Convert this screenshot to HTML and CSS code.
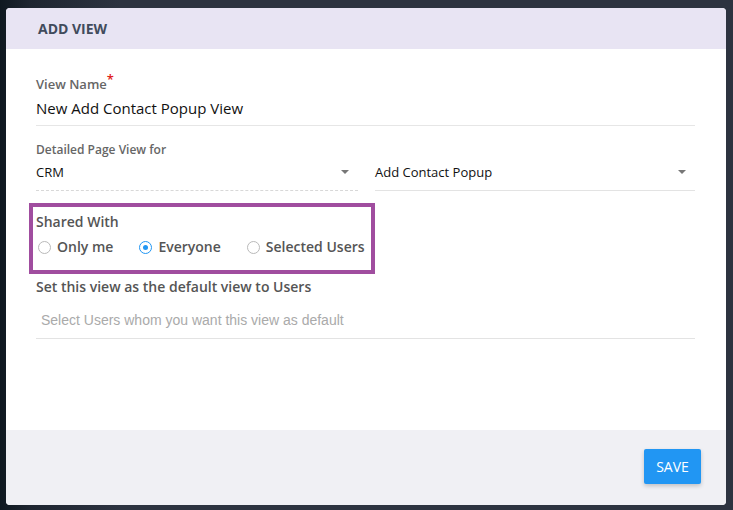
FILE: index.html
```html
<!DOCTYPE html>
<html>
<head lang="en">
    <meta charset="UTF-8">
    <title>Add View</title>
    <link rel="stylesheet" href="styles.css">
</head>
<body>

<div class="modal">
    <div class="modal-head">ADD VIEW</div>
    <div class="modal-body">
        <div class="field">
            <label class="lbl name">View Name<sup class="req">*</sup></label>
            <div class="value">New Add Contact Popup View</div>
        </div>
        <div class="field field-two">
            <label class="lbl">Detailed Page View for</label>
            <div class="selects">
                <div class="select dashed"><span>CRM</span><em class="caret"></em></div>
                <div class="select"><span>Add Contact Popup</span><em class="caret"></em></div>
            </div>
        </div>
        <div class="shared">
            <div class="shared-title">Shared With</div>
            <div class="radios">
                <span class="radio"><i></i>Only me</span>
                <span class="radio on"><i></i>Everyone</span>
                <span class="radio"><i></i>Selected Users</span>
            </div>
        </div>
        <div class="field">
            <label class="lbl big">Set this view as the default view to Users</label>
            <div class="placeholder">Select Users whom you want this view as default</div>
        </div>
    </div>
    <div class="modal-foot">
        <button class="btn-save">SAVE</button>
    </div>
</div>

</body>
</html>
```

FILE: styles.css
```css
* {
    padding: 0;
    margin: 0;
    box-sizing: border-box;
}
html, body { height: 100%; }
body {
    font-family: "Open Sans", "Noto Sans", sans-serif;
    background: linear-gradient(to right, #0f1820 0, #1e2530 30px, #2d3340 120px);
    padding: 8px 0 0 6px;
    overflow: hidden;
}
.modal {
    width: 720px;
    height: 497px;
    background: #fff;
    border-radius: 4px;
    overflow: hidden;
    display: flex;
    flex-direction: column;
}
.modal-head {
    height: 41px;
    line-height: 41px;
    background: #e8e4f3;
    padding-left: 32px;
    font-size: 14px;
    font-weight: 700;
    color: #414b5c;
}
.modal-body {
    flex: 1;
    padding: 27px 31px 0 30px;
}
.lbl {
    display: block;
    font-size: 12px;
    line-height: 16px;
    font-weight: 600;
    color: #666;
}
.lbl.name { font-size: 13px; }
.lbl.big {
    font-size: 14px;
    line-height: 18px;
    color: #555;
}
.req {
    color: #e02020;
    font-size: 13px;
    vertical-align: 0;
    position: relative;
    top: -5px;
    line-height: 0;
}
.value {
    margin-top: 5px;
    font-size: 15px;
    line-height: 22px;
    color: #111;
    padding-bottom: 6px;
    border-bottom: 1px solid #e6e6e6;
}
.field-two { margin-top: 16px; }
.selects {
    display: flex;
    gap: 17px;
    margin-top: 4px;
}
.select {
    flex: 0 0 320px;
    display: flex;
    justify-content: space-between;
    align-items: center;
    font-size: 13px;
    line-height: 20px;
    color: #111;
    padding: 0 9px 8px 0;
    border-bottom: 1px solid #e3e3e3;
}
.select.dashed {
    flex-basis: 322px;
    border-bottom: 1px dashed #d8d8d8;
}
.caret {
    width: 0;
    height: 0;
    border-left: 4px solid transparent;
    border-right: 4px solid transparent;
    border-top: 4px solid #777;
}
.shared {
    width: 346px;
    margin: 12px 0 0 -7px;
    border: 4px solid #a04d9f;
    padding: 6px 0 13px 3px;
}
.shared-title {
    font-size: 14px;
    line-height: 18px;
    color: #555;
    font-weight: 600;
}
.radios {
    display: flex;
    margin-top: 6px;
    font-size: 14px;
    line-height: 20px;
    font-weight: 600;
    color: #555;
    white-space: nowrap;
}
.radio {
    display: flex;
    align-items: center;
    flex: none;
    margin-right: 26px;
}
.radio i {
    flex: none;
    width: 13px;
    height: 13px;
    border: 1px solid #b9b9b9;
    border-radius: 50%;
    margin: 0 6px 0 2px;
    position: relative;
}
.radio + .radio i { margin-left: 0; }
.radio.on i { border-color: #2196f3; }
.radio.on i:after {
    content: "";
    position: absolute;
    left: 3px;
    top: 3px;
    width: 5px;
    height: 5px;
    border-radius: 50%;
    background: #2196f3;
}
.shared + .field { margin-top: 4px; }
.placeholder {
    margin-top: 14px;
    font-family: "Liberation Sans", Arial, sans-serif;
    font-size: 14px;
    line-height: 20px;
    color: #aaa;
    padding: 0 0 8px 5px;
    border-bottom: 1px solid #e3e3e3;
}
.modal-foot {
    height: 75px;
    background: #f0f0f4;
    display: flex;
    justify-content: flex-end;
    align-items: flex-start;
    padding: 19px 25px 0 0;
}
.btn-save {
    width: 57px;
    height: 35px;
    border: none;
    border-radius: 2px;
    background: #2196f3;
    color: #fff;
    font-family: "Open Sans", sans-serif;
    font-size: 14px;
    box-shadow: 0 2px 4px rgba(0,0,0,0.2);
}
```
